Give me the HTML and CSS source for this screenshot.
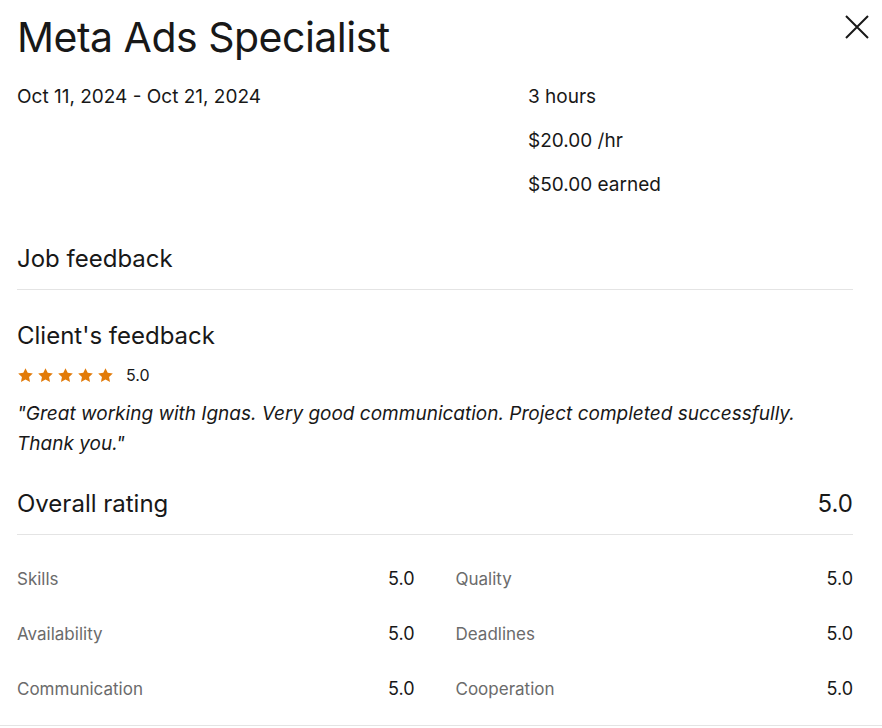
FILE: index.html
```html
<!DOCTYPE html>
<html lang="en">
<head>
<meta charset="utf-8">
<title>Meta Ads Specialist</title>
<link rel="stylesheet" href="styles.css">
</head>
<body>
<div class="content">
  <header class="header">
    <h1 class="title">Meta Ads Specialist</h1>
    <button class="close" aria-label="Close">
      <svg width="24" height="24" viewBox="0 0 24 24" fill="none" stroke="#181818" stroke-width="2" stroke-linecap="butt">
        <path d="M1 1L23 23M23 1L1 23"/>
      </svg>
    </button>
  </header>

  <div class="meta">
    <div class="meta-left">
      <div class="meta-line">Oct 11, 2024 - Oct 21, 2024</div>
    </div>
    <div class="meta-right">
      <div class="meta-line">3 hours</div>
      <div class="meta-line">$20.00 /hr</div>
      <div class="meta-line">$50.00 earned</div>
    </div>
  </div>

  <h2 class="section-title">Job feedback</h2>

  <h3 class="sub-title">Client's feedback</h3>
  <div class="stars-row">
    <div class="stars">
      <svg class="star" viewBox="0 0 24 24"><path d="M12 1.6l3.1 6.6 7.2.9-5.3 5 1.4 7.2L12 17.8l-6.4 3.5 1.4-7.2-5.3-5 7.2-.9z"/></svg>
      <svg class="star" viewBox="0 0 24 24"><path d="M12 1.6l3.1 6.6 7.2.9-5.3 5 1.4 7.2L12 17.8l-6.4 3.5 1.4-7.2-5.3-5 7.2-.9z"/></svg>
      <svg class="star" viewBox="0 0 24 24"><path d="M12 1.6l3.1 6.6 7.2.9-5.3 5 1.4 7.2L12 17.8l-6.4 3.5 1.4-7.2-5.3-5 7.2-.9z"/></svg>
      <svg class="star" viewBox="0 0 24 24"><path d="M12 1.6l3.1 6.6 7.2.9-5.3 5 1.4 7.2L12 17.8l-6.4 3.5 1.4-7.2-5.3-5 7.2-.9z"/></svg>
      <svg class="star" viewBox="0 0 24 24"><path d="M12 1.6l3.1 6.6 7.2.9-5.3 5 1.4 7.2L12 17.8l-6.4 3.5 1.4-7.2-5.3-5 7.2-.9z"/></svg>
    </div>
    <span class="stars-score">5.0</span>
  </div>
  <p class="quote">"Great working with Ignas. Very good communication. Project completed successfully. Thank you."</p>

  <div class="overall">
    <span class="overall-label">Overall rating</span>
    <span class="overall-score">5.0</span>
  </div>

  <div class="ratings">
    <div class="rating"><span class="rating-label">Skills</span><span class="rating-value">5.0</span></div>
    <div class="rating"><span class="rating-label">Quality</span><span class="rating-value">5.0</span></div>
    <div class="rating"><span class="rating-label">Availability</span><span class="rating-value">5.0</span></div>
    <div class="rating"><span class="rating-label">Deadlines</span><span class="rating-value">5.0</span></div>
    <div class="rating"><span class="rating-label">Communication</span><span class="rating-value">5.0</span></div>
    <div class="rating"><span class="rating-label">Cooperation</span><span class="rating-value">5.0</span></div>
  </div>
</div>
<div class="rule"></div>
</body>
</html>
```

FILE: styles.css
```css
* { box-sizing: border-box; }

html, body {
  margin: 0;
  padding: 0;
  background: #ffffff;
}

body {
  font-family: Inter, "Liberation Sans", Arial, sans-serif;
  color: #181818;
  font-size: 19px;
}

.content {
  padding: 0 29px 0 17px;
}

.header {
  display: flex;
  justify-content: space-between;
  align-items: flex-start;
  height: 75px;
}

.title {
  margin: 0;
  font-size: 41px;
  font-weight: 400;
  line-height: 75px;
  letter-spacing: -0.5px;
}

.close {
  margin: 15px -16px 0 0;
  padding: 0;
  border: 0;
  background: none;
  width: 24px;
  height: 24px;
  display: block;
  cursor: pointer;
}

.close svg { display: block; }

.meta {
  display: grid;
  grid-template-columns: 511px 1fr;
}

.meta-line {
  line-height: 44px;
  font-size: 19px;
}

.section-title {
  margin: 32px 0 0;
  font-size: 24px;
  font-weight: 400;
  line-height: 40px;
  padding-bottom: 10px;
  border-bottom: 1px solid #e4e4e4;
}

.sub-title {
  margin: 26px 0 0;
  font-size: 24px;
  font-weight: 400;
  line-height: 40px;
}

.stars-row {
  margin-top: 7px;
  display: flex;
  align-items: center;
  height: 24px;
}

.stars {
  display: flex;
  gap: 3px;
}

.star {
  width: 17px;
  height: 17px;
  fill: #e27b09;
  display: block;
}

.stars-score {
  margin-left: 12px;
  font-size: 16px;
}

.quote {
  margin: 12px 0 0;
  font-style: italic;
  font-size: 19px;
  line-height: 30px;
  padding-right: 40px;
}

.overall {
  margin-top: 25px;
  display: flex;
  justify-content: space-between;
  font-size: 24px;
  line-height: 40px;
  padding-bottom: 10px;
  border-bottom: 1px solid #e4e4e4;
}

.ratings {
  display: grid;
  grid-template-columns: 1fr 1fr;
  column-gap: 41px;
  padding: 16px 0 9px;
}

.rating {
  display: flex;
  justify-content: space-between;
  align-items: center;
  height: 55px;
}

.rating-label {
  color: #6b6b6b;
  font-size: 17px;
}

.rating-value {
  font-size: 18px;
}

.rule {
  border-top: 1px solid #e4e4e4;
}
```
